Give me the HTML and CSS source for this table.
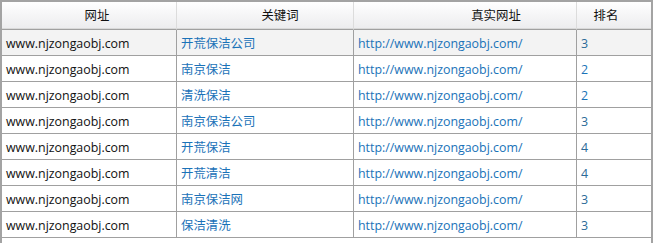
FILE: index.html
```html
<!DOCTYPE html>
<html>
<head>
<meta charset="utf-8">
<link rel="stylesheet" href="styles.css">
</head>
<body>
<div class="frame">
  <div class="grid">
    <div class="hd c1">网址</div>
    <div class="hd c2">关键词</div>
    <div class="hd c3">真实网址</div>
    <div class="hd c4">排名</div>

    <div class="cell site sel">www.njzongaobj.com</div>
    <div class="cell link sel">开荒保洁公司</div>
    <div class="cell link sel">http://www.njzongaobj.com/</div>
    <div class="cell rank sel">3</div>

    <div class="cell site">www.njzongaobj.com</div>
    <div class="cell link">南京保洁</div>
    <div class="cell link">http://www.njzongaobj.com/</div>
    <div class="cell link">2</div>

    <div class="cell site">www.njzongaobj.com</div>
    <div class="cell link">清洗保洁</div>
    <div class="cell link">http://www.njzongaobj.com/</div>
    <div class="cell link">2</div>

    <div class="cell site">www.njzongaobj.com</div>
    <div class="cell link">南京保洁公司</div>
    <div class="cell link">http://www.njzongaobj.com/</div>
    <div class="cell rank">3</div>

    <div class="cell site">www.njzongaobj.com</div>
    <div class="cell link">开荒保洁</div>
    <div class="cell link">http://www.njzongaobj.com/</div>
    <div class="cell rank">4</div>

    <div class="cell site">www.njzongaobj.com</div>
    <div class="cell link">开荒清洁</div>
    <div class="cell link">http://www.njzongaobj.com/</div>
    <div class="cell rank">4</div>

    <div class="cell site">www.njzongaobj.com</div>
    <div class="cell link">南京保洁网</div>
    <div class="cell link">http://www.njzongaobj.com/</div>
    <div class="cell rank">3</div>

    <div class="cell site">www.njzongaobj.com</div>
    <div class="cell link">保洁清洗</div>
    <div class="cell link">http://www.njzongaobj.com/</div>
    <div class="cell rank">3</div>
  </div>
</div>
</body>
</html>
```

FILE: styles.css
```css
html, body {
  margin: 0;
  padding: 0;
  background: #ffffff;
}
body {
  font-family: "Open Sans", "Noto Sans CJK SC", sans-serif;
  font-size: 12.4px;
}
.frame {
  width: 653px;
  height: 243px;
  overflow: hidden;
  box-sizing: border-box;
  border: 2px solid #a3a3a3;
  border-bottom: none;
  background: #ffffff;
}
.grid {
  display: grid;
  grid-template-columns: 175px 177px 223px 74px;
  grid-template-rows: 28px repeat(8, 26px);
}
.hd {
  box-sizing: border-box;
  background: linear-gradient(#ffffff, #f7f7f8 40%, #ececee);
  border-right: 1px solid #dcdcdc;
  border-bottom: 1px solid #a0a0a0;
  box-shadow: inset 0 -1px 0 #d9d9d9;
  color: #111111;
  display: flex;
  align-items: center;
  justify-content: center;
  padding-bottom: 2px;
}
.hd.c1 { padding-left: 16px; }
.hd.c2 { padding-left: 30px; }
.hd.c3 { padding-left: 62px; }
.hd.c4 { padding-right: 16px; border-right: none; }
.cell {
  box-sizing: border-box;
  border-right: 1px solid #a0a0a0;
  border-bottom: 1px solid #a0a0a0;
  display: flex;
  align-items: center;
  padding-left: 4px;
  padding-top: 1px;
  white-space: nowrap;
  overflow: hidden;
}
.cell:nth-child(4n) { border-right: none; }
.sel { background: #f3f3f3; }
.site { color: #111111; }
.link { color: #1a72b8; }
.rank { color: #2b6a98; }
```
